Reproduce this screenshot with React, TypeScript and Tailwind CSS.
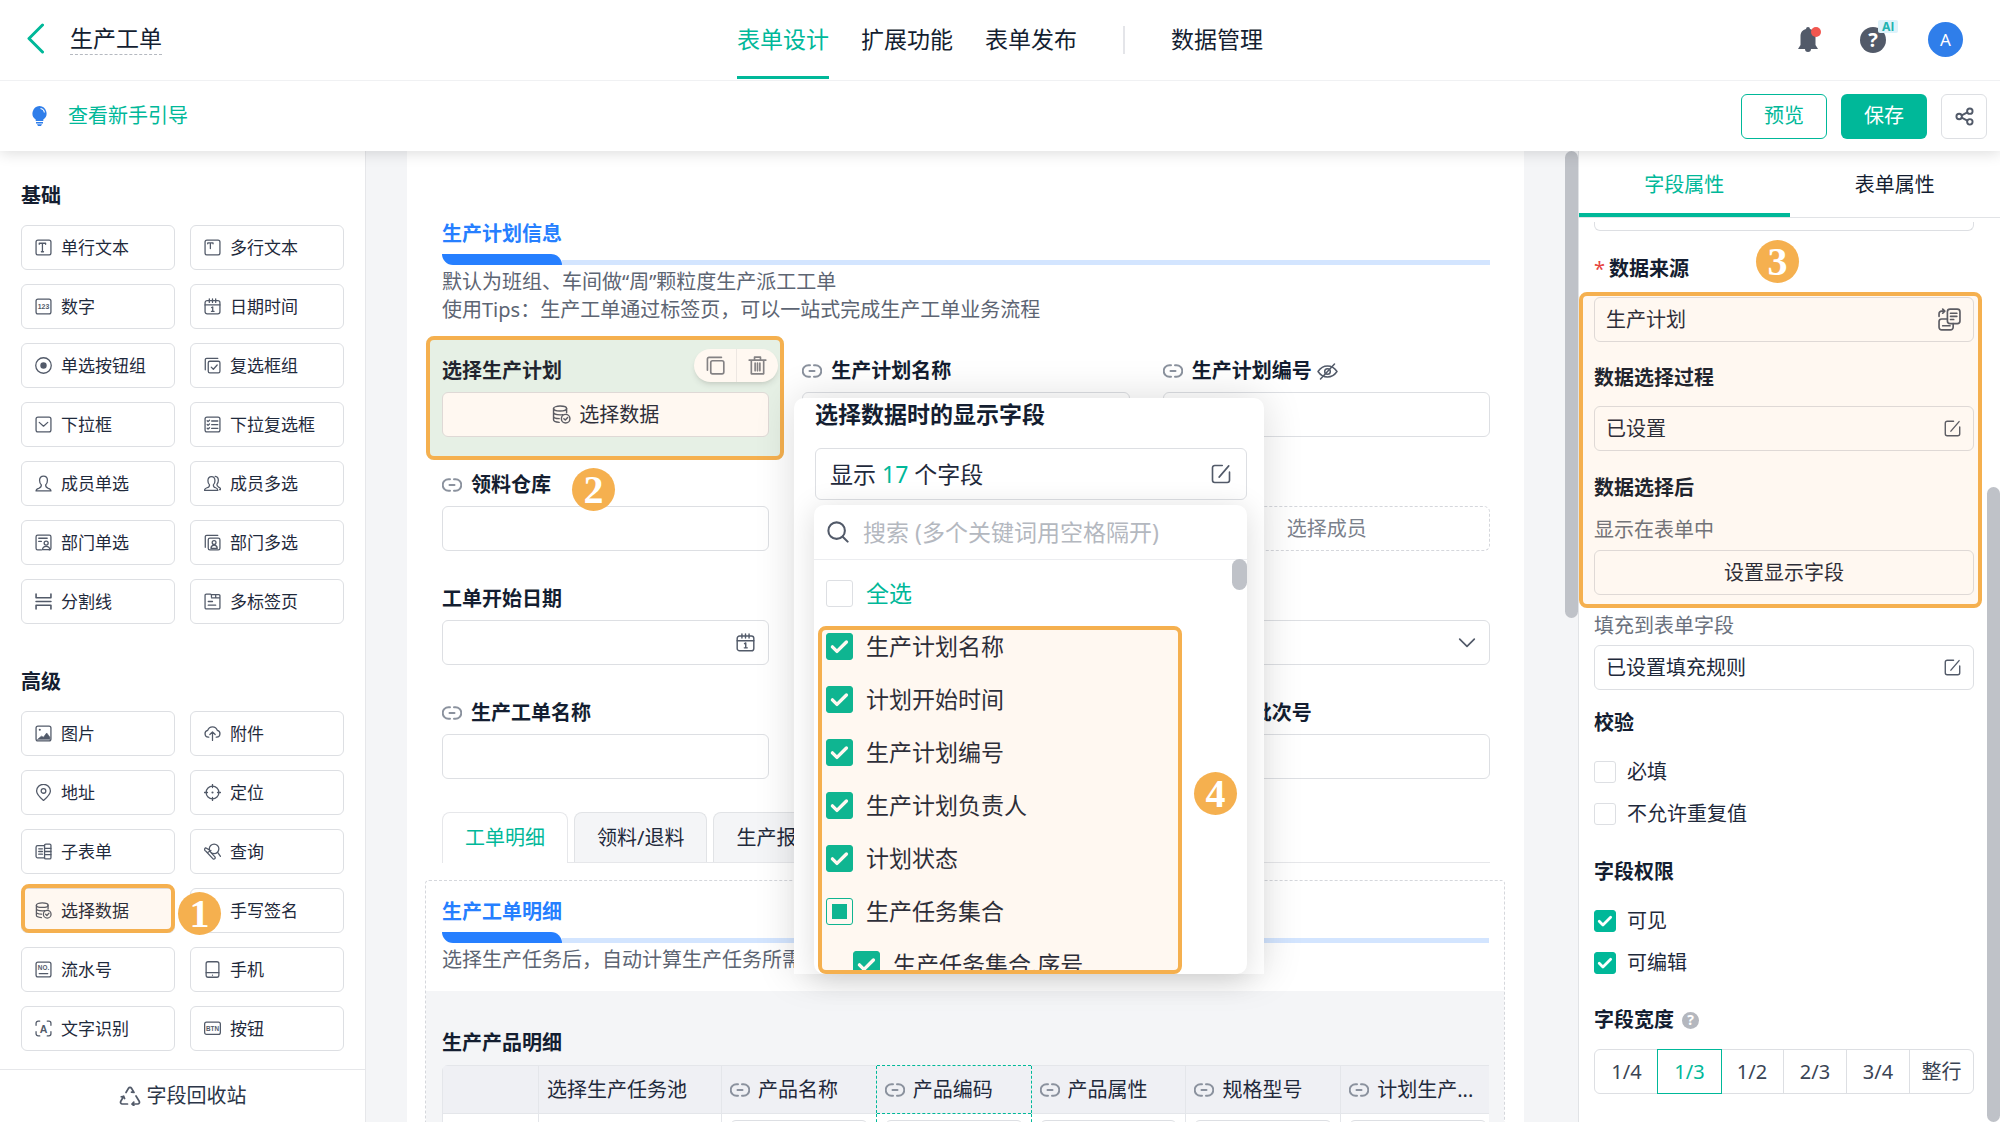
import React from "react";
import clsx from "clsx";

type IconProps = { className?: string };

const Svg = ({
	children,
	className = "size-[17px]",
	box = "0 0 16 16",
	width = 1.2,
}: {
	children: React.ReactNode;
	className?: string;
	box?: string;
	width?: number;
}) => (
	<svg
		viewBox={box}
		fill="none"
		stroke="currentColor"
		strokeWidth={width}
		strokeLinecap="round"
		strokeLinejoin="round"
		className={clsx("shrink-0", className)}
		aria-hidden="true"
	>
		{children}
	</svg>
);

const Frame = () => <rect x="1" y="1" width="14" height="14" rx="1.8" />;

const IconText = ({
	x = 8,
	y,
	size,
	children,
}: {
	x?: number;
	y: number;
	size: number;
	children: string;
}) => (
	<text
		x={x}
		y={y}
		fontSize={size}
		textAnchor="middle"
		fontWeight="700"
		fill="currentColor"
		stroke="none"
		fontFamily="Liberation Sans, sans-serif"
	>
		{children}
	</text>
);

const DataIcon = ({ className }: IconProps) => (
	<Svg className={className}>
		<ellipse cx="6.8" cy="3" rx="5.5" ry="2.1" />
		<path d="M1.3 3v9.5c0 1.2 2.2 2 4.8 2.1M12.3 3v3.6M1.3 6.2c0 1.2 2.4 2.1 5.5 2.1 1 0 1.7-.1 2.2-.2M1.3 9.4c0 1.2 2 2 4.8 2.1" />
		<circle cx="11.5" cy="11.5" r="3.6" />
		<path d="M10 11.5l1.2 1.2 2-2.2" />
	</Svg>
);

const CalendarIcon = ({ className }: IconProps) => (
	<Svg className={className}>
		<rect x="1" y="2.5" width="14" height="12.5" rx="2" />
		<path d="M1 6.5h14M5 .8v3.4M8 .8v3.4M11 .8v3.4M7.2 9l1-.6v4M7 12.5h2.5" />
	</Svg>
);

const EditIcon = ({ className }: IconProps) => (
	<Svg className={className} width={1.3}>
		<path d="M9 1.2H3A1.8 1.8 0 001.2 3v10A1.8 1.8 0 003 14.8h10a1.8 1.8 0 001.8-1.8V6.5M14.2 1.5L6.5 10.5" />
	</Svg>
);

const LinkIcon = () => (
	<Svg box="0 0 20 14" className="h-[14px] w-5 text-[#8b929e]" width={2}>
		<path d="M8 1.2H6.5a5.8 5.8 0 000 11.6H8M12 1.2h1.5a5.8 5.8 0 010 11.6H12M7.5 7h5" />
	</Svg>
);

const icons: Record<string, React.ReactNode> = {
	单行文本: (
		<Svg>
			<Frame />
			<path d="M4 5V4h6v1M7 4v8M6 12h2" />
		</Svg>
	),
	多行文本: (
		<Svg>
			<Frame />
			<path d="M3.5 4.5v-.8h5v.8M6 4v5" />
		</Svg>
	),
	数字: (
		<Svg>
			<Frame />
			<IconText y={10.5} size={6.5}>123</IconText>
		</Svg>
	),
	日期时间: <CalendarIcon />,
	单选按钮组: (
		<Svg>
			<circle cx="8" cy="8" r="7.3" />
			<circle cx="8" cy="8" r="3" fill="currentColor" stroke="none" />
		</Svg>
	),
	复选框组: (
		<Svg>
			<rect x="4" y="4" width="11" height="11" rx="1.5" />
			<path d="M1.2 12V2.5a1.3 1.3 0 011.3-1.3H13M6.8 9.5l2 2 3.6-4" />
		</Svg>
	),
	下拉框: (
		<Svg>
			<Frame />
			<path d="M4 6l4 3.6L12 6" />
		</Svg>
	),
	下拉复选框: (
		<Svg>
			<Frame />
			<path d="M3 4.5l.8.8L5.2 4M3 8l.8.8 1.4-1.3M3 11.5l.8.8L5.2 11M7.2 4.7H13M7.2 8.2H13M7.2 11.7H13" />
		</Svg>
	),
	成员单选: (
		<Svg>
			<path d="M6 9.5C4.8 8.5 4.3 7 4.3 5c0-2.3 1.4-4 3.7-4s3.7 1.7 3.7 4c0 2-.5 3.5-1.7 4.5 0 2 .5 2.4 2.5 3 1.5.4 2.5 1 2.5 2.5H1c0-1.5 1-2.1 2.5-2.5 2-.6 2.5-1 2.5-3z" />
		</Svg>
	),
	成员多选: (
		<Svg>
			<path d="M5.2 9.3C4.2 8.4 3.7 7 3.7 5.3 3.7 3.2 4.9 1.5 7 1.5s3.3 1.7 3.3 3.8c0 1.7-.5 3.1-1.5 4 0 1.8.4 2.2 2.2 2.7 1.3.4 2 1 2 2.5H.5c0-1.5.9-2.1 2.3-2.5 2-.5 2.4-.9 2.4-2.7z" />
			<path d="M10.5 1.2c1.9.2 3 1.7 3 3.7 0 1.7-.5 3-1.4 3.9 0 1.8.4 2.1 1.7 2.6 1.2.4 1.9 1 1.9 2.4h-1" />
		</Svg>
	),
	部门单选: (
		<Svg>
			<path d="M6 15H2.5A1.5 1.5 0 011 13.5v-11A1.5 1.5 0 012.5 1h11A1.5 1.5 0 0115 2.5v11a1.5 1.5 0 01-1.5 1.5M3.5 4h8M3.5 7H6" />
			<circle cx="10.5" cy="8.5" r="1.9" />
			<path d="M7 14.8c.2-2 1.6-3.2 3.5-3.2s3.3 1.2 3.5 3.2z" />
		</Svg>
	),
	部门多选: (
		<Svg>
			<path d="M1.2 12.5v-10a1.3 1.3 0 011.3-1.3H13" />
			<rect x="4" y="3.8" width="11" height="11.2" rx="1.5" />
			<circle cx="9.5" cy="8" r="1.8" />
			<path d="M6.5 13.5c.2-1.9 1.4-3 3-3s2.8 1.1 3 3z" />
		</Svg>
	),
	分割线: (
		<Svg width={1.5}>
			<path d="M1 1v3.5h14V1M1 8h14M1 15v-3.5h14V15" />
		</Svg>
	),
	多标签页: (
		<Svg>
			<path d="M7 3.5V2a1 1 0 00-1-1H2.2A1.2 1.2 0 001 2.2v11.6A1.2 1.2 0 002.2 15h11.6a1.2 1.2 0 001.2-1.2V2.5a1 1 0 00-1-1H7M7 4.5h8M11 1.5v3M4 8h4M4 11.5h7" />
		</Svg>
	),
	图片: (
		<Svg>
			<Frame />
			<circle cx="4.5" cy="4.5" r="1" fill="currentColor" stroke="none" />
			<path d="M2.5 13.5l3.5-3 2 1 3-4 3 4v2z" fill="currentColor" strokeWidth="0.6" />
		</Svg>
	),
	附件: (
		<Svg>
			<path d="M4.5 11.5H4A3.3 3.3 0 013.5 5C4.2 3 6 1.8 8 1.8S11.8 3 12.5 5A3.3 3.3 0 0112 11.5h-.5M8 14.5V6.5M5.5 9L8 6.5 10.5 9" />
		</Svg>
	),
	地址: (
		<Svg>
			<path d="M8 15.5C4 12 1.5 9.3 1.5 6.5a6.5 6.2 0 0113 0c0 2.8-2.5 5.5-6.5 9z" />
			<circle cx="8" cy="6.5" r="2.2" />
		</Svg>
	),
	定位: (
		<Svg>
			<circle cx="8" cy="8" r="6" />
			<circle cx="8" cy="8" r="1" fill="currentColor" stroke="none" />
			<path d="M8 .3v3M8 12.7v3M.3 8h3M12.7 8h3" />
		</Svg>
	),
	子表单: (
		<Svg>
			<path d="M9 2.5H2.5A1.5 1.5 0 001 4v8.5A1.5 1.5 0 002.500 14H9M3.5 5.500H7M3.500 8H7M3.500 10.500H7" />
			<rect x="9" y="1" width="6" height="14" rx="1.2" />
			<path d="M9 5h6M9 8h6M9 11h6" />
		</Svg>
	),
	查询: (
		<Svg>
			<circle cx="9.5" cy="5.5" r="4.5" />
			<path d="M13 9l2.5 3.5M5 6.5L1.5 4.500c-1.300 1-1.300 2.500.3 3.300L8.500 15c1.500.5 2.500-.8 1.800-2L7 9.500M3.500 9l3-2" />
		</Svg>
	),
	选择数据: <DataIcon />,
	手写签名: (
		<Svg>
			<path d="M2 14.5h12M3 11.5l1-3 7-7 2.5 2.5-7 7z" />
		</Svg>
	),
	流水号: (
		<Svg>
			<Frame />
			<IconText y={8.8} size={6}>NO.</IconText>
			<path d="M4 11.8h8" />
		</Svg>
	),
	手机: (
		<Svg>
			<rect x="2" y=".7" width="12" height="14.6" rx="1.8" />
			<path d="M2 11h12M8 13.2v.1" />
		</Svg>
	),
	文字识别: (
		<Svg>
			<path d="M1 5V3a2 2 0 012-2h1.5M11.5 1H13a2 2 0 012 2v2M15 11v2a2 2 0 01-2 2h-1.5M4.5 15H3a2 2 0 01-2-2v-2" />
			<IconText y={12} size={10}>A</IconText>
		</Svg>
	),
	按钮: (
		<Svg>
			<rect x=".6" y="2" width="14.8" height="11.5" rx="1.8" />
			<IconText y={10} size={6}>BTN</IconText>
		</Svg>
	),
};

const basic = [
	"单行文本",
	"多行文本",
	"数字",
	"日期时间",
	"单选按钮组",
	"复选框组",
	"下拉框",
	"下拉复选框",
	"成员单选",
	"成员多选",
	"部门单选",
	"部门多选",
	"分割线",
	"多标签页",
];

const advanced = [
	"图片",
	"附件",
	"地址",
	"定位",
	"子表单",
	"查询",
	"选择数据",
	"手写签名",
	"流水号",
	"手机",
	"文字识别",
	"按钮",
];

const box = "rounded-md border border-[#dddfe3] bg-white";

const Step = ({ n, className }: { n: number; className: string }) => (
	<span
		className={clsx(
			"absolute z-20 flex size-[43px] items-center justify-center rounded-full bg-[#f5b04f] font-['Liberation_Serif',serif] text-[40px] font-bold leading-[43px] text-white",
			className
		)}
	>
		{n}
	</span>
);

const Highlight = ({ className }: { className: string }) => (
	<div
		className={clsx(
			"pointer-events-none absolute rounded-lg border-4 border-[#f5b04f] bg-[#ff9014]/6",
			className
		)}
	></div>
);

const CheckBox = ({
	label,
	checked,
	partial,
	big,
	textClass,
}: {
	label: string;
	checked?: boolean;
	partial?: boolean;
	big?: boolean;
	textClass?: string;
}) => (
	<label className={clsx("flex items-center", big ? "gap-[13px]" : "gap-[11px]")}>
		<span className={clsx("relative shrink-0", big ? "size-[27px]" : "size-[22px]")}>
			<input
				type="checkbox"
				defaultChecked={checked}
				className={clsx(
					"block size-full appearance-none rounded-[3px] border bg-white checked:border-[#00b899] checked:bg-[#00b899]",
					partial ? "border-[#00b899]" : "border-[#dddfe3]"
				)}
			/>
			{checked && (
				<Svg className="absolute inset-0 size-full text-white" width={2}>
					<path d="M3.8 8.2l2.7 2.7 5.6-5.6" />
				</Svg>
			)}
			{partial && <span className="absolute inset-[6px] bg-[#00b899]"></span>}
		</span>
		<span className={textClass}>{label}</span>
	</label>
);

const FieldGrid = ({ names }: { names: string[] }) => (
	<div className="grid grid-cols-2 gap-x-[15px] gap-y-[14px]">
		{names.map((name) => (
			<div key={name} className="relative">
				<button
					className={clsx(
						box,
						"flex h-[45px] w-full items-center gap-[9px] rounded-lg pl-[13px] text-[17px] text-[#1f2a3c]"
					)}
				>
					<span className="text-[#525a69]">{icons[name]}</span>
					{name}
				</button>
				{name === "选择数据" && (
					<>
						<Highlight className="inset-x-0 -top-1 bottom-0" />
						<Step n={1} className="left-full top-1 ml-[3px]" />
					</>
				)}
			</div>
		))}
	</div>
);

const Header = () => (
	<header className="relative z-30 shrink-0 bg-white shadow-[0_2px_14px_rgba(0,0,0,0.14)]">
		<div className="flex h-[81px] items-start border-b border-[#f0f1f3]">
			<div className="flex flex-1 items-center gap-[26px] pl-[27px] pr-[10px] pt-[22px]">
				<button aria-label="返回" className="text-[#00b899]">
					<Svg box="0 0 17 31" className="h-[31px] w-[17px]" width={3}>
						<path d="M15.5 2L2 15.5 15.5 29" />
					</Svg>
				</button>
				<h1 className="border-b border-dashed border-[#b5b9c0] text-[23px] leading-8 text-[#141e31]">
					生产工单
				</h1>
			</div>
			<nav className="flex items-center text-[23px]">
				<a
					href="#design"
					className="mr-8 flex h-[79px] items-center border-b-[3px] border-[#00b899] pt-[2px] text-[#00b899]"
				>
					表单设计
				</a>
				<a href="#extend" className="mr-8">扩展功能</a>
				<a href="#publish">表单发布</a>
				<span className="mx-[46px] h-7 w-[2px] bg-[#e4e5e9]"></span>
				<a href="#data">数据管理</a>
			</nav>
			<div className="flex flex-1 items-center justify-end gap-[42px] pr-[37px] pt-[22px]">
				<button aria-label="通知" className="relative text-[#525a69]">
					<svg viewBox="0 0 20 26" className="h-[26px] w-5" fill="currentColor">
						<path d="M8 2a2 2 0 014 0c3.5.8 5.5 3.6 5.5 7.5V18l2.5 4h-7a3 3 0 01-6 0H0l2.5-4V9.5C2.5 5.6 4.5 2.800 8 2z" />
					</svg>
					<span className="absolute -right-[3px] top-0 size-[10px] rounded-full bg-[#f2564f]"></span>
				</button>
				<button
					aria-label="帮助"
					className="relative flex size-[26px] items-center justify-center rounded-full bg-[#525a69] text-[20px] font-bold leading-none text-white"
				>
					?
					<span className="absolute -right-3 -top-[7px] h-[13px] rounded-xs bg-[#def3fb] px-1 font-[Inter,sans-serif] text-[12px] leading-[13px] text-[#22b3b0]">
						AI
					</span>
				</button>
				<button className="flex size-[35px] items-center justify-center rounded-full bg-[#2f7eea] text-[17px] text-white">
					A
				</button>
			</div>
		</div>
		<div className="flex h-[70px] items-center pl-8 pr-[13px] text-[20px]">
			<svg viewBox="0 0 15 20" className="h-5 w-[15px] text-[#2f7eea]" fill="currentColor">
				<path d="M7.5 0A7.4 7.4 0 0111.3 13.5V15H3.7v-1.5A7.4 7.4 0 017.5 0z" />
				<path d="M4 16h7v1.5H4zM5 18.3h5L9 20H6z" />
				<path d="M8.5 2.5c2 .3 3.6 1.8 3.9 4" fill="none" stroke="#fff" strokeWidth="1.1" />
			</svg>
			<a href="#guide" className="ml-[21px] text-[#00b899]">查看新手引导</a>
			<button className="ml-auto h-[45px] rounded-md border border-[#00b899] px-[22px] text-[#00b899]">
				预览
			</button>
			<button className="ml-[14px] h-[45px] rounded-md bg-[#00b899] px-[23px] text-white">
				保存
			</button>
			<button
				aria-label="分享"
				className={clsx(box, "ml-[14px] flex h-[45px] w-[46px] items-center justify-center text-[#525a69]")}
			>
				<Svg className="size-[19px]" width={1.6}>
					<circle cx="3.5" cy="8" r="2.3" />
					<circle cx="12.5" cy="3.5" r="2.3" />
					<circle cx="12.5" cy="12.5" r="2.3" />
					<path d="M5.6 7l4.8-2.5M5.6 9l4.8 2.5" />
				</Svg>
			</button>
		</div>
	</header>
);

const Sidebar = () => (
	<aside className="flex w-[366px] shrink-0 flex-col border-r border-[#e6e7ea] bg-white">
		<div className="px-[21px] pt-[31px]">
			<h2 className="mb-[15px] text-[20px] font-bold leading-7">基础</h2>
			<FieldGrid names={basic} />
			<h2 className="mb-[15px] mt-11 text-[20px] font-bold leading-7">高级</h2>
			<FieldGrid names={advanced} />
		</div>
		<button className="mt-auto flex h-[53px] items-center justify-center gap-[6px] border-t border-[#e6e7ea] text-[20px] text-[#2c3648]">
			<Svg box="0 0 22 20" className="h-5 w-[22px] text-[#525a69]" width={1.7}>
				<path d="M7 6.5L9.5 2.3c.7-1.2 2.3-1.2 3 0L15 6.500l-2.500-.3M17 10l3.200 5.200c.7 1.200-.1 2.800-1.500 2.800H13l1.800-1.800M13 18l1.800 1.500M8.500 18H3.300c-1.400 0-2.200-1.600-1.500-2.800L4.700 10.200l-2.400.6M4.700 10.200l.9 2.300" />
			</Svg>
			字段回收站
		</button>
	</aside>
);

const Section = ({ title, lines }: { title: string; lines: string[] }) => (
	<div className="text-[20px] leading-7">
		<div className="flex items-end">
			<h2 className="flex flex-col gap-[6px] font-bold text-[#267fff]">
				{title}
				<span className="h-[11px] rounded-bl-[11px] rounded-tr-[11px] bg-[#267fff]"></span>
			</h2>
			<span className="h-[5px] flex-1 bg-[#d3e5ff]"></span>
		</div>
		<div className="mt-[3px] text-[#5d6573]">
			{lines.map((line) => (
				<p key={line} className="whitespace-nowrap">{line}</p>
			))}
		</div>
	</div>
);

const Field = ({
	id,
	label,
	linked,
	hidden,
	children,
}: {
	id: string;
	label?: string;
	linked?: boolean;
	hidden?: boolean;
	children?: React.ReactNode;
}) => (
	<div className="relative">
		<label
			htmlFor={id}
			className="mb-[7px] flex h-7 items-center gap-[9px] font-bold leading-7"
		>
			{linked && <LinkIcon />}
			{label}
			{hidden && (
				<Svg box="0 0 21 17" className="-ml-1 h-[17px] w-[21px] text-[#525a69]" width={1.5}>
					<path d="M1 8.5C3.5 4.8 6.7 3 10.5 3S17.5 4.8 20 8.5c-2.5 3.7-5.7 5.5-9.500 5.500S3.500 12.200 1 8.500z" />
					<circle cx="10.5" cy="8.5" r="2.8" />
					<path d="M17.5 1l-14 15" />
				</Svg>
			)}
		</label>
		{children || <input id={id} className={clsx(box, "block h-[45px] w-full px-3")} />}
	</div>
);

const columns = ["产品名称", "产品编码", "产品属性", "规格型号", "计划生产..."];

// the selected column draws its own dashed sides, so its neighbours drop theirs
const cellBorder: Record<string, string> = {
	产品名称: "border border-r-0 border-[#e4e6ea]",
	产品编码: "border border-dashed border-[#00b899]",
	产品属性: "border border-l-0 border-[#e4e6ea]",
	规格型号: "border border-[#e4e6ea]",
	"计划生产...": "border border-[#e4e6ea]",
};

const FormCanvas = () => (
	<div className="h-full overflow-hidden bg-white pl-[35px] pr-[34px] pt-[69px] text-[20px]">
		<Section
			title="生产计划信息"
			lines={[
				"默认为班组、车间做“周”颗粒度生产派工工单",
				"使用Tips：生产工单通过标签页，可以一站式完成生产工单业务流程",
			]}
		/>
		<div className="mt-[33px] grid grid-cols-3 gap-x-[33px] gap-y-[34px]">
			<div className="relative">
				<div className="absolute -bottom-[23px] -left-4 -right-[15px] -top-[21px] rounded-lg bg-[#e5f7f3]"></div>
				<p className="relative mb-[7px] h-7 font-bold leading-7">选择生产计划</p>
				<button
					className={clsx(box, "relative flex h-[45px] w-full items-center justify-center gap-2 text-[#1f2a3c]")}
				>
					<DataIcon className="size-[19px] text-[#525a69]" />
					选择数据
				</button>
				<div className="absolute -right-[9px] -top-2 flex h-[33px] w-[84px] rounded-full bg-white text-[#7d828c] shadow-md">
					<button aria-label="复制" className="flex flex-1 items-center justify-center border-r border-[#ecedf0]">
						<Svg className="size-[19px]" width={1.4}>
							<rect x="4" y="4" width="11" height="11" rx="1.5" />
							<path d="M1.2 12V2.5a1.3 1.3 0 011.3-1.3H13" />
						</Svg>
					</button>
					<button aria-label="删除" className="flex flex-1 items-center justify-center">
						<Svg className="size-[19px]" width={1.4}>
							<path d="M1 3.5h14M5.5 3.5V1h5v2.5M2.8 3.5V15h10.4V3.5M6 6v6.5M8 6v6.5M10 6v6.5" />
						</Svg>
					</button>
				</div>
				<Highlight className="-bottom-[23px] -left-4 -right-[15px] -top-[21px]" />
				<Step n={2} className="left-[130px] top-[111px]" />
			</div>
			<Field id="plan-name" label="生产计划名称" linked />
			<Field id="plan-no" label="生产计划编号" linked hidden />
			<Field id="warehouse" label="领料仓库" linked />
			<div></div>
			<Field id="member">
				<button
					id="member"
					className="block h-[45px] w-full rounded-md border border-dashed border-[#d5d7dc] pl-[123px] text-left text-[#7b818c]"
				>
					选择成员
				</button>
			</Field>
			<Field id="start-date" label="工单开始日期">
				<div className={clsx(box, "flex h-[45px] items-center pr-[13px]")}>
					<input id="start-date" className="min-w-0 flex-1 px-3 outline-none" />
					<CalendarIcon className="size-[19px] text-[#525a69]" />
				</div>
			</Field>
			<div></div>
			<Field id="kind">
				<div className="relative">
					<select id="kind" aria-label="类型" className={clsx(box, "block h-[45px] w-full appearance-none")}>
						<option></option>
					</select>
					<Svg className="pointer-events-none absolute right-[14px] top-[14px] size-[18px] text-[#525a69]" width={1.5}>
						<path d="M1.5 4.5L8 11l6.5-6.5" />
					</Svg>
				</div>
			</Field>
			<Field id="order-name" label="生产工单名称" linked />
			<div></div>
			<Field id="batch" label="原材料批次号" linked />
		</div>

		<div role="tablist" className="mt-[33px] flex h-[51px] gap-[6px]">
			<button role="tab" className="rounded-t-lg border border-b-0 border-[#e6e7ea] px-[22px] text-[#00b899]">
				工单明细
			</button>
			<div className="-ml-[6px] flex flex-1 gap-[6px] border-b border-[#e6e7ea] pl-[6px] text-[#1f2a3c]">
				<button role="tab" className="rounded-t-lg border border-b-0 border-[#e1e3e6] bg-[#f4f5f7] px-[22px]">
					领料/退料
				</button>
				<button role="tab" className="rounded-t-lg border border-b-0 border-[#e1e3e6] bg-[#f4f5f7] px-[22px]">
					生产报工
				</button>
			</div>
		</div>

		<div className="-ml-[17px] -mr-[15px] mt-[17px] h-[400px] rounded-sm border border-dashed border-[#d5d7dc] pt-[17px]">
			<div className="pl-4 pr-[15px]">
				<Section title="生产工单明细" lines={["选择生产任务后，自动计算生产任务所需"]} />
			</div>
			<div className="mt-[17px] h-full bg-[#f4f5f7] pl-4 pr-[15px] pt-[38px]">
				<h3 className="mb-2 font-bold leading-7">生产产品明细</h3>
				<div className="overflow-hidden rounded-tl-md">
					<table className="w-[1054px] table-fixed border-collapse text-left">
						<thead>
							<tr className="h-12 bg-[#eff0f4] text-[#1f2a3c]">
								<th className="w-24 border border-[#e4e6ea]"></th>
								<th className="w-[183px] border border-[#e4e6ea] pl-2 font-normal">选择生产任务池</th>
								{columns.map((c) => (
									<th key={c} className={clsx("pl-2 font-normal", cellBorder[c])}>
										<span className="flex items-center gap-2">
											<LinkIcon />
											{c}
										</span>
									</th>
								))}
							</tr>
						</thead>
						<tbody>
							<tr className="h-14 bg-white">
								<td className="border border-[#e4e6ea]"></td>
								<td className="border border-[#e4e6ea]"></td>
								{columns.map((c) => (
									<td key={c} className={clsx("border-t-0 px-2 py-[5px]", cellBorder[c])}>
										<input aria-label={c} className={clsx(box, "block h-11 w-full")} />
									</td>
								))}
							</tr>
						</tbody>
					</table>
				</div>
			</div>
		</div>
	</div>
);

const FieldPicker = () => (
	<div className="absolute left-[428px] top-[247px] z-10 w-[470px] rounded-t-[10px] bg-white pl-[21px] pr-[17px] text-[23px] text-[#1f2a3c] shadow-[0_0_40px_rgba(0,0,0,0.14)]">
		<h2 className="font-bold leading-8 text-[#141e31]">选择数据时的显示字段</h2>
		<button className={clsx(box, "mt-[18px] flex h-[52px] w-full items-center justify-between pl-[14px] pr-[15px]")}>
			<span>
				显示 <span className="text-[#00b899]">17</span> 个字段
			</span>
			<EditIcon className="size-[20px] text-[#525a69]" />
		</button>
		<div className="relative -ml-px mt-[5px] h-[469px] overflow-hidden rounded-[10px] bg-white shadow-[0_4px_30px_rgba(0,0,0,0.14)]">
			<div className="flex h-[55px] items-center gap-[14px] border-b border-[#ecedf0] pl-[13px]">
				<Svg className="size-[22px] text-[#525a69]" width={1.5}>
					<circle cx="7" cy="7" r="6" />
					<path d="M11.4 11.4L15 15" />
				</Svg>
				<input
					aria-label="搜索"
					placeholder="搜索 (多个关键词用空格隔开)"
					className="min-w-0 flex-1 outline-none placeholder:text-[#b4b8bf]"
				/>
			</div>
			<span className="absolute right-0 top-[54px] h-[31px] w-[15px] rounded-full bg-[#bfc2c8]"></span>
			<div className="pl-3 pt-[7px]">
				<div className="flex h-[53px] items-center">
					<CheckBox big label="全选" textClass="text-[#00b899]" />
				</div>
				{["生产计划名称", "计划开始时间", "生产计划编号", "生产计划负责人", "计划状态"].map((name) => (
					<div key={name} className="flex h-[53px] items-center">
						<CheckBox big checked label={name} />
					</div>
				))}
				<div className="flex h-[53px] items-center">
					<CheckBox big partial label="生产任务集合" />
				</div>
				<div className="flex h-[53px] items-center pl-[27px]">
					<CheckBox big checked label="生产任务集合.序号" />
				</div>
			</div>
			<Highlight className="bottom-0 left-1 right-[65px] top-[121px]" />
		</div>
		<Step n={4} className="right-[27px] top-[374px]" />
	</div>
);

const PanelBox = ({ children, icon }: { children: React.ReactNode; icon: React.ReactNode }) => (
	<button className={clsx(box, "flex h-[45px] w-full items-center justify-between pl-[11px] pr-3 text-[#1f2a3c]")}>
		{children}
		<span className="text-[#525a69]">{icon}</span>
	</button>
);

const PropsPanel = () => (
	<aside className="flex w-[422px] shrink-0 flex-col border-l border-[#e1e3e6] bg-white text-[20px] leading-7">
		<div role="tablist" className="grid h-[67px] grid-cols-2 border-b border-[#e1e3e6]">
			<button role="tab" className="border-b-4 border-[#00b899] pt-[6px] text-[#00b899]">
				字段属性
			</button>
			<button role="tab" className="pt-[2px]">表单属性</button>
		</div>
		<div className="relative flex-1 overflow-hidden pl-[15px] pr-[26px] pt-1">
			<div className="h-[9px] rounded-b-md border border-t-0 border-[#dddfe3]"></div>
			<h3 className="mt-6 flex gap-1 font-bold">
				<span className="font-normal text-[#e64340]">*</span>
				数据来源
			</h3>
			<Step n={3} className="left-[177px] top-[22px]" />
			<div className="relative mt-[14px]">
				<PanelBox
					icon={
						<Svg box="0 0 22 22" className="size-[23px]" width={1.6}>
							<rect x="9" y="1" width="12" height="14" rx="2.5" />
							<path d="M12 5h6M12 8h6M12 11h3M9 10.500H3.500A2.500 2.500 0 001 13v5.500A2.500 2.500 0 003.500 21H12a2.500 2.500 0 002.500-2.500V15M4.500 17h7M1 8V5.500A2.500 2.500 0 013.500 3H6M4.500 1l2 2-2 2" />
						</Svg>
					}
				>
					生产计划
				</PanelBox>
				<h3 className="mb-[14px] mt-[22px] font-bold">数据选择过程</h3>
				<PanelBox icon={<EditIcon />}>已设置</PanelBox>
				<h3 className="mt-[23px] font-bold">数据选择后</h3>
				<p className="mb-[6px] mt-[14px] text-[#6b727e]">显示在表单中</p>
				<button className={clsx(box, "h-[45px] w-full text-[#1f2a3c]")}>设置显示字段</button>
				<Highlight className="-bottom-[13px] -left-[15px] -right-2 -top-[5px]" />
			</div>
			<p className="mb-[5px] mt-[17px] text-[#6b727e]">填充到表单字段</p>
			<PanelBox icon={<EditIcon />}>已设置填充规则</PanelBox>
			<h3 className="mb-[21px] mt-[19px] font-bold">校验</h3>
			<div className="flex flex-col gap-[14px] text-[#1f2a3c]">
				<CheckBox label="必填" />
				<CheckBox label="不允许重复值" />
			</div>
			<h3 className="mb-[21px] mt-[30px] font-bold">字段权限</h3>
			<div className="flex flex-col gap-[14px] text-[#1f2a3c]">
				<CheckBox checked label="可见" />
				<CheckBox checked label="可编辑" />
			</div>
			<h3 className="mb-[15px] mt-[29px] flex items-center gap-2 font-bold">
				字段宽度
				<span className="flex size-[17px] items-center justify-center rounded-full bg-[#b4b7be] text-[14px] leading-none text-white">
					?
				</span>
			</h3>
			<div className={clsx(box, "grid h-[45px] grid-cols-6 text-[#3a4454]")}>
				{["1/4", "1/3", "1/2", "2/3", "3/4", "整行"].map((w, i) => (
					<button
						key={w}
						className={clsx(
							w === "1/3"
								? "-m-px border border-[#00b899] text-[#00b899]"
								: i < 5 && i > 1 && "border-r border-[#dddfe3]"
						)}
					>
						{w}
					</button>
				))}
			</div>
			<span className="absolute bottom-0 right-0 top-[269px] w-[13px] rounded-full bg-[#bfc2c8]"></span>
		</div>
	</aside>
);

const App = () => {
	return (
		<div className="flex h-screen flex-col overflow-hidden bg-white font-['Noto_Sans','Noto_Sans_CJK_SC',sans-serif] text-[#141e31]">
			<Header />
			<div className="flex min-h-0 flex-1">
				<Sidebar />
				<main className="relative min-w-0 flex-1 bg-[#f4f5f7] pl-[41px] pr-[54px]">
					<FormCanvas />
					<FieldPicker />
					<span className="absolute right-0 top-0 h-[467px] w-[13px] rounded-full bg-[#bfc2c8]"></span>
				</main>
				<PropsPanel />
			</div>
		</div>
	);
};

export default App;
